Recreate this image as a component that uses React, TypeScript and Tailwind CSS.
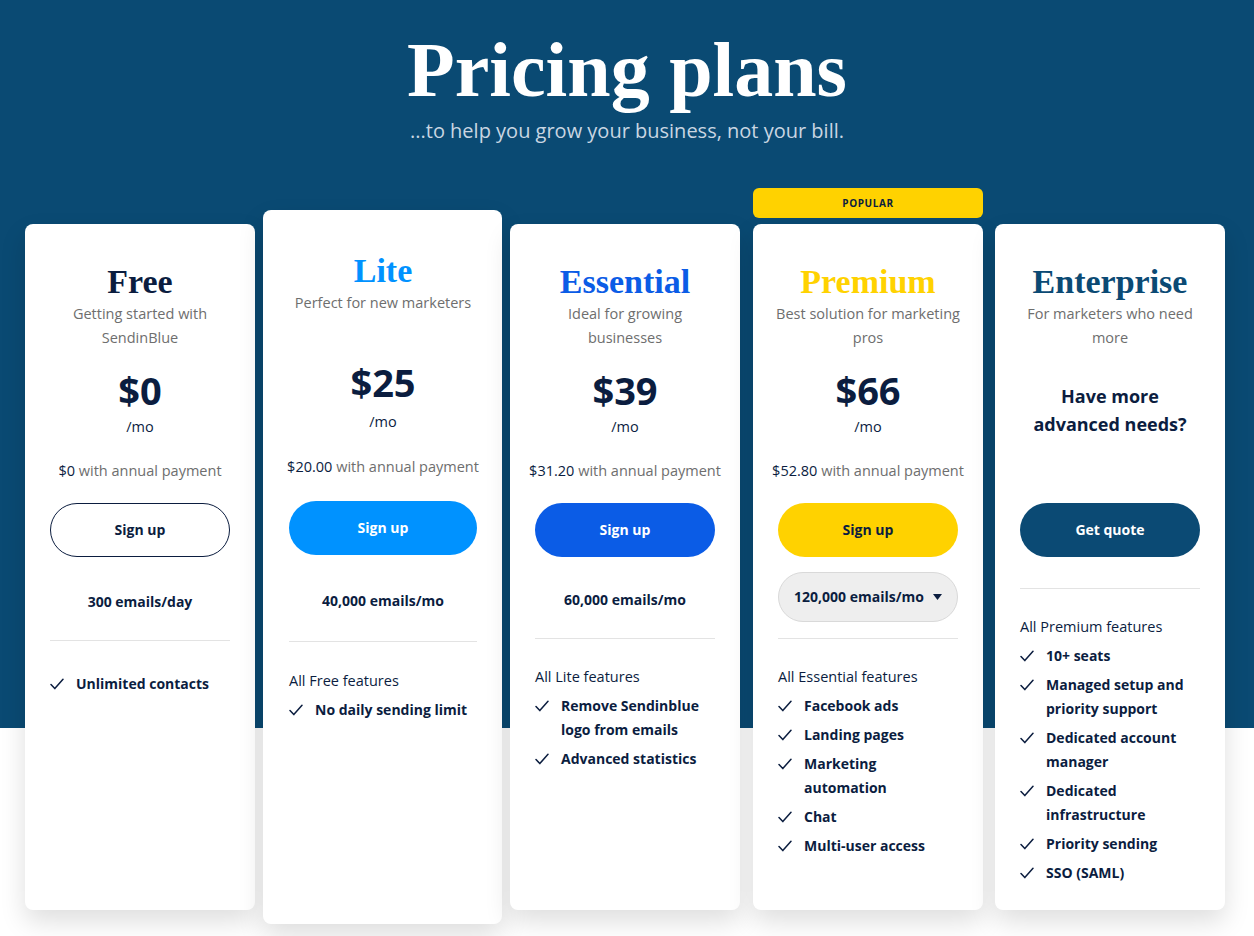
const navy = 'text-[#0b1d3f]';

function Check() {
  return (
    <svg width="14" height="12" viewBox="0 0 14 12" fill="none" className="shrink-0">
      <path d="M1 6.5L4.8 10.6L13 1.2" stroke="#0b1d3f" strokeWidth="1.5" strokeLinecap="round" strokeLinejoin="round" />
    </svg>
  );
}

function Features({ label, items, className }: { label?: string; items: string[]; className: string }) {
  return (
    <div className={className}>
      {label && <p className={`text-[14.5px] leading-5 ${navy}`}>{label}</p>}
      <ul className={`space-y-[5px] ${label ? 'mt-[7px]' : ''}`}>
        {items.map(f => (
          <li key={f} className="flex items-start gap-3">
            <span className="h-6 flex items-center"><Check /></span>
            <span className={`text-sm leading-6 font-bold ${navy}`}>{f}</span>
          </li>
        ))}
      </ul>
    </div>
  );
}

function Price({ price, annual, top, mo = 'mt-[5px]', pay = 'mt-[24px]' }: { price: string; annual: string; top: string; mo?: string; pay?: string }) {
  return (
    <div className={`flex flex-col items-center ${top}`}>
      <p className={`text-[38px] leading-[44px] font-bold ${navy}`}>{price}</p>
      <p className={`${mo} text-[14.5px] leading-5 ${navy}`}>/mo</p>
      <p className={`${pay} whitespace-nowrap text-[14.5px] leading-5 text-[#6e6e6e]`}>
        <span className={navy}>{annual}</span> with annual payment
      </p>
    </div>
  );
}

function Title({ name, color, subtitle }: { name: string; color: string; subtitle: string }) {
  return (
    <div className="text-center">
      <h2 className={`font-['Liberation_Serif',serif] font-bold text-[34px] leading-[40px] ${color}`}>{name}</h2>
      <p className="-mx-[4px] text-[14.5px] leading-6 text-[#6e6e6e] min-h-[48px]">{subtitle}</p>
    </div>
  );
}

const divider = 'h-px bg-[#e3e3e3]';
const card = 'bg-white rounded-lg shadow-[0_12px_26px_rgba(0,0,0,0.13)] px-[25px]';

export default function App() {
  return (
    <div className="min-h-screen w-full font-['Open_Sans',sans-serif] bg-[linear-gradient(to_bottom,#0a4a73_728px,#ffffff_728px)] overflow-hidden">
      <header className="pt-[31px] text-center">
        <h1 className="font-['Liberation_Serif',serif] font-bold text-[78px] leading-[78px] text-white">Pricing plans</h1>
        <p className="mt-[10px] text-[20px] leading-6 text-[#c9d6e2]">...to help you grow your business, not your bill.</p>
      </header>

      <div className="mt-[45px] flex items-start pl-[25px]">
        {/* Free */}
        <div className={`${card} w-[230px] h-[686px] mt-[36px] pt-[38px]`}>
          <Title name="Free" color={navy} subtitle="Getting started with SendinBlue" />
          <Price price="$0" annual="$0" top="mt-[18px]" />
          <button className={`mt-[22px] w-full h-[54px] rounded-full border border-[#0b1d3f] bg-white text-sm font-bold ${navy}`}>Sign up</button>
          <p className={`mt-[35px] text-center text-sm leading-5 font-bold ${navy}`}>300 emails/day</p>
          <div className={`mt-[28px] ${divider}`} />
          <Features className="mt-[31px]" items={['Unlimited contacts']} />
        </div>

        {/* Lite */}
        <div className={`${card} ml-[8px] w-[239px] h-[714px] mt-[22px] pt-[41px] pl-[26px]`}>
          <Title name="Lite" color="text-[#0092ff]" subtitle="Perfect for new marketers" />
          <Price price="$25" annual="$20.00" top="mt-[21px]" mo="mt-[8px]" pay="mt-[25px]" />
          <button className="mt-[24px] w-full h-[54px] rounded-full bg-[#0092ff] text-white text-sm font-bold">Sign up</button>
          <p className={`mt-[36px] text-center text-sm leading-5 font-bold ${navy}`}>40,000 emails/mo</p>
          <div className={`mt-[30px] ${divider}`} />
          <Features className="mt-[29px] whitespace-nowrap" label="All Free features" items={['No daily sending limit']} />
        </div>

        {/* Essential */}
        <div className={`${card} ml-[8px] w-[230px] h-[686px] mt-[36px] pt-[38px]`}>
          <Title name="Essential" color="text-[#0b5ce6]" subtitle="Ideal for growing businesses" />
          <Price price="$39" annual="$31.20" top="mt-[18px]" />
          <button className="mt-[22px] w-full h-[54px] rounded-full bg-[#0b5ce6] text-white text-sm font-bold">Sign up</button>
          <p className={`mt-[33px] text-center text-sm leading-5 font-bold ${navy}`}>60,000 emails/mo</p>
          <div className={`mt-[28px] ${divider}`} />
          <Features
            className="mt-[28px]"
            label="All Lite features"
            items={['Remove Sendinblue logo from emails', 'Advanced statistics']}
          />
        </div>

        {/* Premium */}
        <div className="ml-[13px] w-[230px] flex flex-col">
          <div className={`h-[30px] rounded-md bg-[#ffd200] flex items-center justify-center text-[10px] font-bold tracking-[0.06em] ${navy}`}>POPULAR</div>
          <div className={`${card} mt-[6px] h-[686px] pt-[38px]`}>
            <Title name="Premium" color="text-[#ffd200]" subtitle="Best solution for marketing pros" />
            <Price price="$66" annual="$52.80" top="mt-[18px]" />
            <button className={`mt-[22px] w-full h-[54px] rounded-full bg-[#ffd200] text-sm font-bold ${navy}`}>Sign up</button>
            <div className="mt-[15px] h-[50px] rounded-full border border-[#d9d9d9] bg-[#eeeeee] flex items-center justify-between pl-[15px] pr-[15px]">
              <span className={`text-sm font-bold ${navy}`}>120,000 emails/mo</span>
              <svg width="9" height="6" viewBox="0 0 9 6"><path d="M0 0H9L4.5 6Z" fill="#0b1d3f" /></svg>
            </div>
            <div className={`mt-[16px] ${divider}`} />
            <Features
              className="mt-[28px]"
              label="All Essential features"
              items={['Facebook ads', 'Landing pages', 'Marketing automation', 'Chat', 'Multi-user access']}
            />
          </div>
        </div>

        {/* Enterprise */}
        <div className={`${card} ml-[12px] w-[230px] h-[686px] mt-[36px] pt-[38px]`}>
          <Title name="Enterprise" color="text-[#0b4a74]" subtitle="For marketers who need more" />
          <div className="h-[131px] pt-[32px] text-center">
            <p className={`text-lg leading-7 font-bold ${navy}`}>Have more advanced needs?</p>
          </div>
          <button className="mt-[22px] w-full h-[54px] rounded-full bg-[#0b4a74] text-white text-sm font-bold">Get quote</button>
          <div className={`mt-[31px] ${divider}`} />
          <Features
            className="mt-[28px]"
            label="All Premium features"
            items={['10+ seats', 'Managed setup and priority support', 'Dedicated account manager', 'Dedicated infrastructure', 'Priority sending', 'SSO (SAML)']}
          />
        </div>
      </div>
    </div>
  );
}
